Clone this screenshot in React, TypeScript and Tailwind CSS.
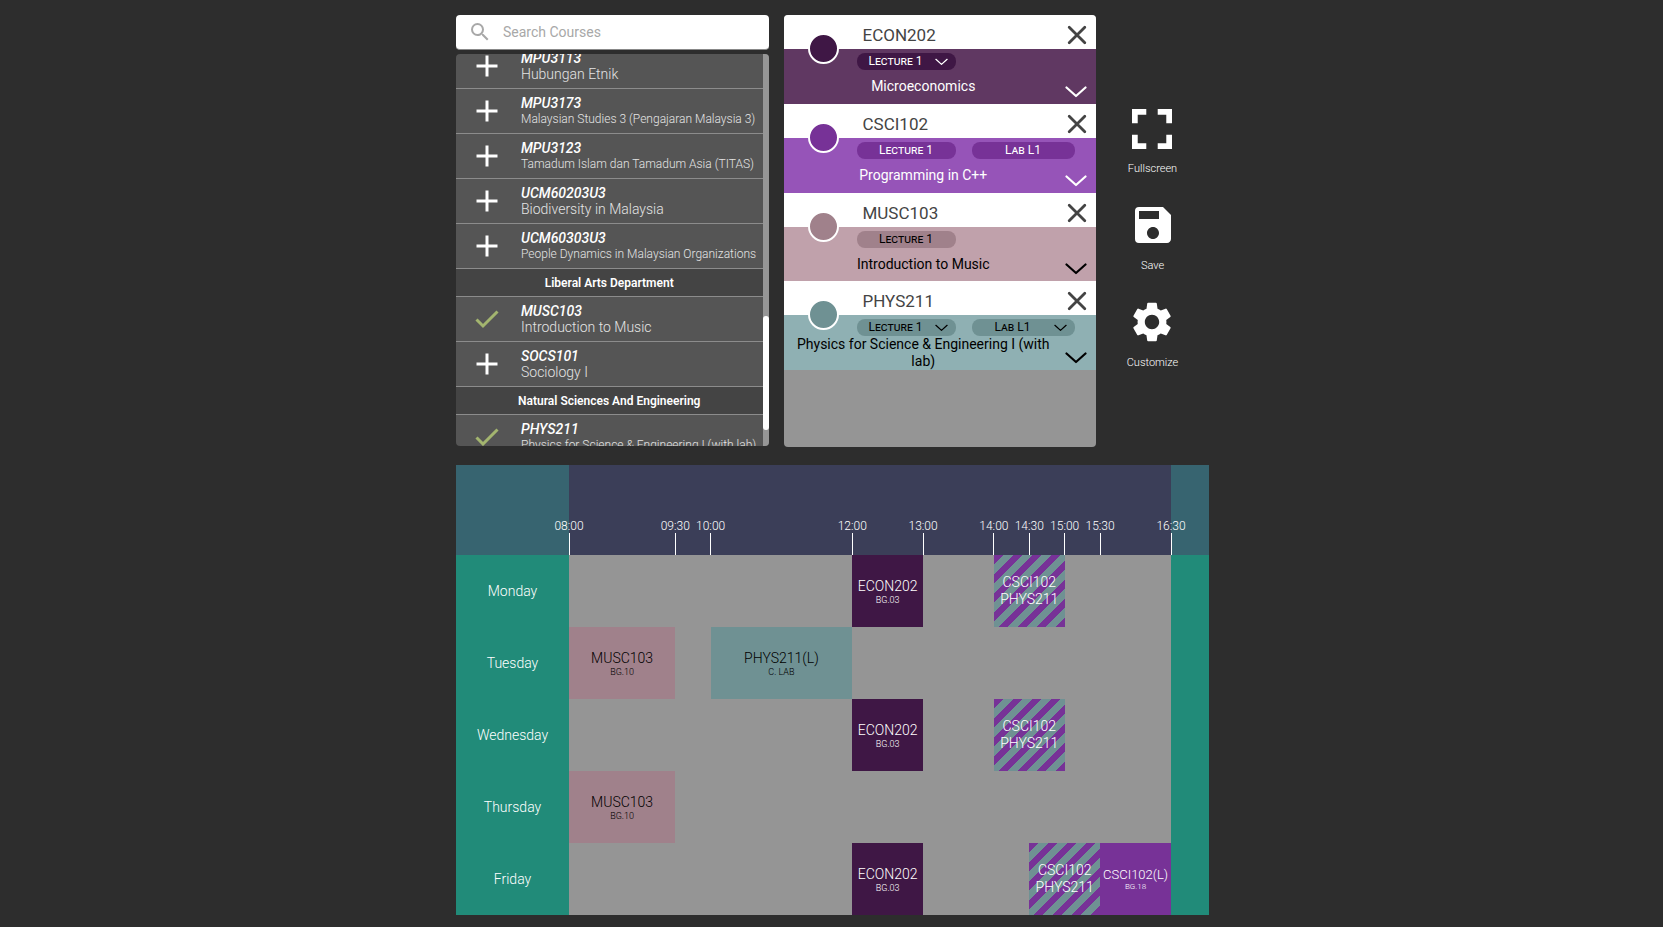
import { MdSave, MdSearch, MdSettings } from "react-icons/md";

type Listing = { code: string; name: string; added?: boolean; long?: boolean };
type Section = { heading?: string; courses: Listing[] };

const sections: Section[] = [
  {
    courses: [
      { code: "MPU3113", name: "Hubungan Etnik" },
      { code: "MPU3173", name: "Malaysian Studies 3 (Pengajaran Malaysia 3)", long: true },
      { code: "MPU3123", name: "Tamadum Islam dan Tamadum Asia (TITAS)", long: true },
      { code: "UCM60203U3", name: "Biodiversity in Malaysia" },
      { code: "UCM60303U3", name: "People Dynamics in Malaysian Organizations", long: true },
    ],
  },
  {
    heading: "Liberal Arts Department",
    courses: [
      { code: "MUSC103", name: "Introduction to Music", added: true },
      { code: "SOCS101", name: "Sociology I" },
    ],
  },
  {
    heading: "Natural Sciences And Engineering",
    courses: [
      { code: "PHYS211", name: "Physics for Science & Engineering I (with lab)", added: true, long: true },
    ],
  },
];

type Group = { label: string; choice?: boolean };
type Course = {
  code: string;
  name: string;
  dark: string;
  light: string;
  text: string;
  groups: Group[];
};

const selected: Course[] = [
  {
    code: "ECON202",
    name: "Microeconomics",
    dark: "bg-[#3f1745]",
    light: "bg-[#603862]",
    text: "text-white",
    groups: [{ label: "Lecture 1", choice: true }],
  },
  {
    code: "CSCI102",
    name: "Programming in C++",
    dark: "bg-[#773297]",
    light: "bg-[#9654b8]",
    text: "text-white",
    groups: [{ label: "Lecture 1" }, { label: "Lab L1" }],
  },
  {
    code: "MUSC103",
    name: "Introduction to Music",
    dark: "bg-[#a0818b]",
    light: "bg-[#c0a1ab]",
    text: "text-black",
    groups: [{ label: "Lecture 1" }],
  },
  {
    code: "PHYS211",
    name: "Physics for Science & Engineering I (with lab)",
    dark: "bg-[#6f9193]",
    light: "bg-[#8fb0b3]",
    text: "text-black",
    groups: [
      { label: "Lecture 1", choice: true },
      { label: "Lab L1", choice: true },
    ],
  },
];

const econ = "bg-[#3f1745] text-white";
const csci = "bg-[#773297] text-white";
const musc = "bg-[#a0818b] text-black";
const phys = "bg-[#6f9193] text-black";
const clash =
  "bg-[repeating-linear-gradient(-45deg,#773297_0%,#773297_6.67%,#6f9193_6.67%,#6f9193_13.33%)] text-white";

/* Spans are counted in half hours from 08:00. */
type Slot = { span: number; lines?: string[]; room?: string; look?: string; small?: boolean };

const week: { day: string; slots: Slot[] }[] = [
  {
    day: "Monday",
    slots: [
      { span: 8 },
      { span: 2, lines: ["ECON202"], room: "BG.03", look: econ },
      { span: 2 },
      { span: 2, lines: ["CSCI102", "PHYS211"], look: clash },
      { span: 3 },
    ],
  },
  {
    day: "Tuesday",
    slots: [
      { span: 3, lines: ["MUSC103"], room: "BG.10", look: musc },
      { span: 1 },
      { span: 4, lines: ["PHYS211(L)"], room: "C. LAB", look: phys },
      { span: 9 },
    ],
  },
  {
    day: "Wednesday",
    slots: [
      { span: 8 },
      { span: 2, lines: ["ECON202"], room: "BG.03", look: econ },
      { span: 2 },
      { span: 2, lines: ["CSCI102", "PHYS211"], look: clash },
      { span: 3 },
    ],
  },
  {
    day: "Thursday",
    slots: [{ span: 3, lines: ["MUSC103"], room: "BG.10", look: musc }, { span: 14 }],
  },
  {
    day: "Friday",
    slots: [
      { span: 8 },
      { span: 2, lines: ["ECON202"], room: "BG.03", look: econ },
      { span: 3 },
      { span: 2, lines: ["CSCI102", "PHYS211"], look: clash },
      { span: 2, lines: ["CSCI102(L)"], room: "BG.18", look: csci, small: true },
    ],
  },
];

const times = [
  { label: "08:00", span: 3 },
  { label: "09:30", span: 1 },
  { label: "10:00", span: 4 },
  { label: "12:00", span: 2 },
  { label: "13:00", span: 2 },
  { label: "14:00", span: 1 },
  { label: "14:30", span: 1 },
  { label: "15:00", span: 1 },
  { label: "15:30", span: 2 },
];

function Plus() {
  return (
    <svg viewBox="0 0 22 22" className="size-[22px]" stroke="white" strokeWidth="3" aria-hidden="true">
      <path d="M11 0.5V21.5M0.5 11H21.5" />
    </svg>
  );
}

function Check() {
  return (
    <svg viewBox="0 0 24 20" className="h-5 w-6" fill="none" stroke="#a3b56f" strokeWidth="3" aria-hidden="true">
      <path d="M1.5 10.5L8 17L22.5 2.5" />
    </svg>
  );
}

function Cross() {
  return (
    <svg viewBox="0 0 20 20" className="size-5" stroke="#444" strokeWidth="2.8" strokeLinecap="round" aria-hidden="true">
      <path d="M2.2 2.2L17.8 17.8M17.8 2.2L2.2 17.8" />
    </svg>
  );
}

function Chevron({ className }: { className: string }) {
  return (
    <svg
      viewBox="0 0 22 12"
      className={className}
      fill="none"
      stroke="currentColor"
      strokeWidth="2.2"
      strokeLinecap="round"
      strokeLinejoin="round"
      aria-hidden="true"
    >
      <path d="M1.5 1.5L11 10L20.5 1.5" />
    </svg>
  );
}

function FullscreenIcon() {
  return (
    <svg viewBox="5 5 14 14" className="size-10" fill="white" aria-hidden="true">
      <path d="M7 14H5v5h5v-2H7v-3zm-2-4h2V7h3V5H5v5zm12 7h-3v2h5v-5h-2v3zM14 5v2h3v3h2V5h-5z" />
    </svg>
  );
}

function CourseList() {
  return (
    <div className="flex h-[392px] overflow-hidden rounded bg-[#555]">
      <div className="min-w-0 flex-1 overflow-hidden">
        <div className="-mt-2.5">
          {sections.map((section, i) => (
            <section key={i}>
              {section.heading && (
                <h2 className="flex h-7 items-center justify-center border-b border-[#8c8c8c] bg-[#444] text-xs font-semibold text-white">
                  {section.heading}
                </h2>
              )}
              <ul>
                {section.courses.map((c) => (
                  <li key={c.code} className="flex h-[45px] items-center border-b border-[#8c8c8c]">
                    <button
                      type="button"
                      aria-label={c.added ? `Remove ${c.code}` : `Add ${c.code}`}
                      className="flex w-[61px] shrink-0 justify-center"
                    >
                      {c.added ? <Check /> : <Plus />}
                    </button>
                    <div className="pl-1 whitespace-nowrap text-white">
                      <div className="text-sm leading-4 font-medium italic">{c.code}</div>
                      <div
                        className={
                          c.long
                            ? "text-xs leading-4 font-light text-[#e4e4e4]"
                            : "text-sm leading-4 font-light text-[#e4e4e4]"
                        }
                      >
                        {c.name}
                      </div>
                    </div>
                  </li>
                ))}
              </ul>
            </section>
          ))}
        </div>
      </div>
      <div className="w-1.5 bg-[#969696] pt-[262px]">
        <div className="h-[114px] rounded-full bg-white" />
      </div>
    </div>
  );
}

function GroupChip({ group, course, first }: { group: Group; course: Course; first: boolean }) {
  const width = first ? "w-[99px]" : "w-[103px]";
  const base = `h-[17px] rounded-lg text-xs leading-[17px] text-center [font-variant:small-caps] ${course.dark} ${course.text}`;
  if (!group.choice) {
    return <span className={`${base} ${width}`}>{group.label}</span>;
  }
  return (
    <span className={`relative flex ${width}`}>
      <select
        aria-label={`${course.code} group`}
        className={`${base} w-full appearance-none pr-[21px] [text-align-last:center]`}
      >
        <option>{group.label}</option>
      </select>
      <Chevron className={`pointer-events-none absolute top-[5px] right-2 h-2 w-[13px] ${course.text}`} />
    </span>
  );
}

function CourseCard({ course }: { course: Course }) {
  return (
    <article className="relative flex flex-col">
      <header className="flex h-[34px] items-center justify-between bg-white pt-1.5 pr-[9px] pl-[79px]">
        <h3 className="text-[17px] leading-6 text-[#444]">{course.code}</h3>
        <button type="button" aria-label={`Remove ${course.code}`}>
          <Cross />
        </button>
      </header>
      <span className={`absolute top-[18px] left-6 size-[31px] rounded-full border-2 border-white ${course.dark}`} />
      <div className={`flex flex-1 flex-col pt-1 ${course.light} ${course.text}`}>
        <div className="flex gap-4 pl-[73px]">
          {course.groups.map((g, i) => (
            <GroupChip key={g.label} group={g} course={course} first={i === 0} />
          ))}
        </div>
        <div className="flex flex-1 items-center pr-[9px]">
          <p className="min-w-0 flex-1 pr-2.5 pl-2 text-center text-sm leading-[17px]">{course.name}</p>
          <button type="button" aria-label={`Show details of ${course.code}`} className="pt-2.5">
            <Chevron className="h-3 w-[22px]" />
          </button>
        </div>
      </div>
    </article>
  );
}

function Timetable() {
  return (
    <table className="w-full table-fixed border-collapse bg-[#959595]">
      <colgroup>
        <col className="w-[113px]" />
        <col span={17} />
        <col className="w-[38px]" />
      </colgroup>
      <thead>
        <tr className="h-[90px] bg-[#3b3e58]">
          <td className="bg-[#376470]" />
          {times.map((t) => (
            <th key={t.label} colSpan={t.span} scope="col" className="p-0 align-bottom font-light">
              <div className="-ml-5 flex w-10 flex-col items-center text-xs leading-[14px] text-white">
                {t.label}
                <span className="h-[22px] w-px bg-white" />
              </div>
            </th>
          ))}
          <th scope="col" className="bg-[#376470] p-0 align-bottom font-light">
            <div className="-ml-5 flex w-10 flex-col items-center text-xs leading-[14px] text-white">
              16:30
              <span className="h-[22px] w-px bg-white" />
            </div>
          </th>
        </tr>
      </thead>
      <tbody>
        {week.map(({ day, slots }) => (
          <tr key={day} className="h-[72px]">
            <th scope="row" className="bg-[#218b79] p-0 text-sm font-light text-white">
              {day}
            </th>
            {slots.map((s, i) =>
              s.lines ? (
                <td key={i} colSpan={s.span} className={`p-0 text-center font-light ${s.look}`}>
                  {s.lines.map((line) => (
                    <div key={line} className={s.small ? "text-[13px] leading-[15px]" : "text-sm leading-[17px]"}>
                      {line}
                    </div>
                  ))}
                  {s.room && (
                    <div className={s.small ? "text-[8px] leading-[9px]" : "text-[9px] leading-[10px]"}>{s.room}</div>
                  )}
                </td>
              ) : (
                <td key={i} colSpan={s.span} />
              ),
            )}
            <td className="bg-[#218b79]" />
          </tr>
        ))}
      </tbody>
    </table>
  );
}

export default function App() {
  return (
    <div className="min-h-screen bg-[#2d2d2d] pt-[15px] pb-3 pl-0.5 font-['Roboto',sans-serif]">
      <main className="mx-auto w-full max-w-[753px]">
        <div className="mb-[18px] flex">
          <div className="flex min-w-0 flex-1 gap-[15px]">
            <div className="flex min-w-0 flex-1 flex-col gap-1">
              <label className="flex h-[35px] items-center gap-[11px] rounded border-b border-[#888] bg-white pl-3">
                <MdSearch className="size-6 text-[#a8a8a8]" />
                <input
                  type="search"
                  aria-label="Search Courses"
                  placeholder="Search Courses"
                  className="min-w-0 flex-1 text-sm text-[#444] outline-none placeholder:text-[#a8a8a8]"
                />
              </label>
              <CourseList />
            </div>
            <div className="h-[432px] min-w-0 flex-1 overflow-hidden rounded bg-[#959595]">
              <div className="grid h-[355px] grid-rows-4">
                {selected.map((c) => (
                  <CourseCard key={c.code} course={c} />
                ))}
              </div>
            </div>
          </div>
          <nav className="flex w-[113px] flex-col items-center gap-6 pt-[89px] text-[11px] leading-4 font-light text-white">
            <button type="button" className="flex h-[73px] flex-col items-center justify-between pt-[5px]">
              <FullscreenIcon />
              Fullscreen
            </button>
            <button type="button" className="flex h-[73px] flex-col items-center justify-between">
              <MdSave className="size-12" />
              Save
            </button>
            <button type="button" className="flex h-[73px] flex-col items-center justify-between">
              <MdSettings className="size-12" />
              Customize
            </button>
          </nav>
        </div>
        <Timetable />
      </main>
    </div>
  );
}
